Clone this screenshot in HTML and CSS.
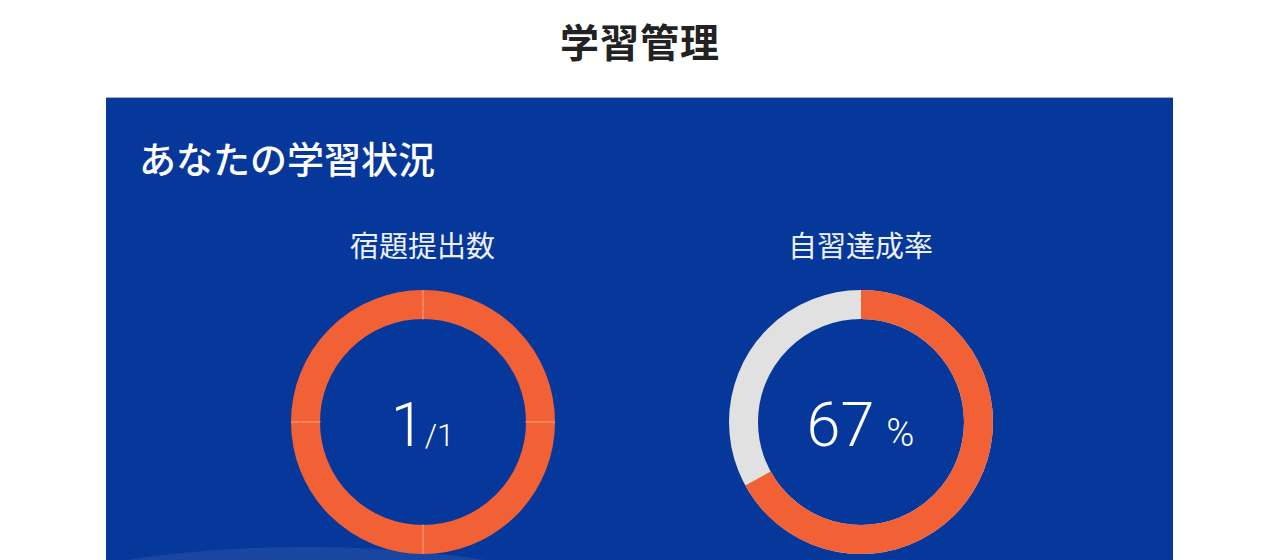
FILE: index.html
```html
<!DOCTYPE html>
<html lang="ja">
<head>
    <meta charset="UTF-8">
    <meta name="viewport" content="width=device-width, initial-scale=1.0">
    <title>学習管理</title>
    <link rel="stylesheet" href="styles.css">
</head>
<body>

<h1 class="page-title">学習管理</h1>

<section class="status-panel">
    <h2 class="panel-title">あなたの学習状況</h2>

    <div class="stats">
        <!-- 宿題提出数 -->
        <div class="stat">
            <p class="stat-label">宿題提出数</p>
            <div class="donut">
                <svg class="donut-svg" viewBox="0 0 264 264" width="264" height="264">
                    <circle cx="132" cy="132" r="117.5" fill="none" stroke="#f26135" stroke-width="29"/>
                    <g stroke="rgba(255,255,255,0.28)" stroke-width="1.5">
                        <line x1="132" y1="0" x2="132" y2="30"/>
                        <line x1="132" y1="234" x2="132" y2="264"/>
                        <line x1="0" y1="132" x2="30" y2="132"/>
                        <line x1="234" y1="132" x2="264" y2="132"/>
                    </g>
                </svg>
                <div class="donut-value">
                    <span class="big">1</span><span class="small">/1</span>
                </div>
            </div>
        </div>

        <!-- 自習達成率 -->
        <div class="stat">
            <p class="stat-label">自習達成率</p>
            <div class="donut">
                <svg class="donut-svg" viewBox="0 0 264 264" width="264" height="264">
                    <circle cx="132" cy="132" r="117.5" fill="none" stroke="#e1e1e1" stroke-width="29"/>
                    <circle cx="132" cy="132" r="117.5" fill="none" stroke="#f26135" stroke-width="29"
                            stroke-dasharray="494.6 738.3" transform="rotate(-90 132 132)"/>
                </svg>
                <div class="donut-value">
                    <span class="big">67</span><span class="unit">%</span>
                </div>
            </div>
        </div>
    </div>
</section>

</body>
</html>
```

FILE: styles.css
```css
/* Stili generali */
body {
    margin: 0;
    padding: 0;
    background-color: #fff;
    color: #222;
    font-family: "Noto Sans CJK JP", "Noto Sans", sans-serif;
}

.page-title {
    margin: 0;
    height: 97px;
    line-height: 80px;
    text-align: center;
    font-size: 39px;
    font-weight: 700;
    color: #222;
    letter-spacing: 1px;
}

/* Pannello blu */
.status-panel {
    position: relative;
    overflow: hidden;
    margin: 0 107px 0 106px;
    min-height: 520px;
    padding: 35px 33px 0;
    background-color: #06379a;
    border-top: 1px solid #9fb0d4;
    box-sizing: border-box;
    color: #fff;
}

.status-panel::after {
    content: "";
    position: absolute;
    left: -120px;
    top: 449px;
    width: 640px;
    height: 150px;
    border-radius: 50%;
    background: rgba(255, 255, 255, 0.08);
}

.panel-title {
    margin: 0;
    font-size: 37px;
    font-weight: 500;
    line-height: 50px;
}

.stats {
    display: grid;
    grid-template-columns: 438px 438px;
    justify-content: center;
    margin-top: 41px;
    padding-left: 4px;
    position: relative;
    z-index: 1;
}

.stat {
    display: flex;
    flex-direction: column;
    align-items: center;
}

.stat-label {
    margin: 0;
    font-size: 29px;
    line-height: 40px;
    color: #eef1f8;
}

.donut {
    display: grid;
    width: 264px;
    height: 264px;
    margin-top: 26px;
}

.donut-svg,
.donut-value {
    grid-area: 1 / 1;
}

.donut-value {
    display: flex;
    align-items: baseline;
    justify-content: center;
    align-self: center;
    font-family: Roboto, "Liberation Sans", sans-serif;
    font-weight: 300;
    line-height: 1;
    padding-top: 6px;
}

.donut-value .big {
    font-size: 61px;
}

.donut-value .small {
    font-size: 31px;
}

.donut-value .unit {
    font-size: 38px;
    margin-left: 12px;
}
```
